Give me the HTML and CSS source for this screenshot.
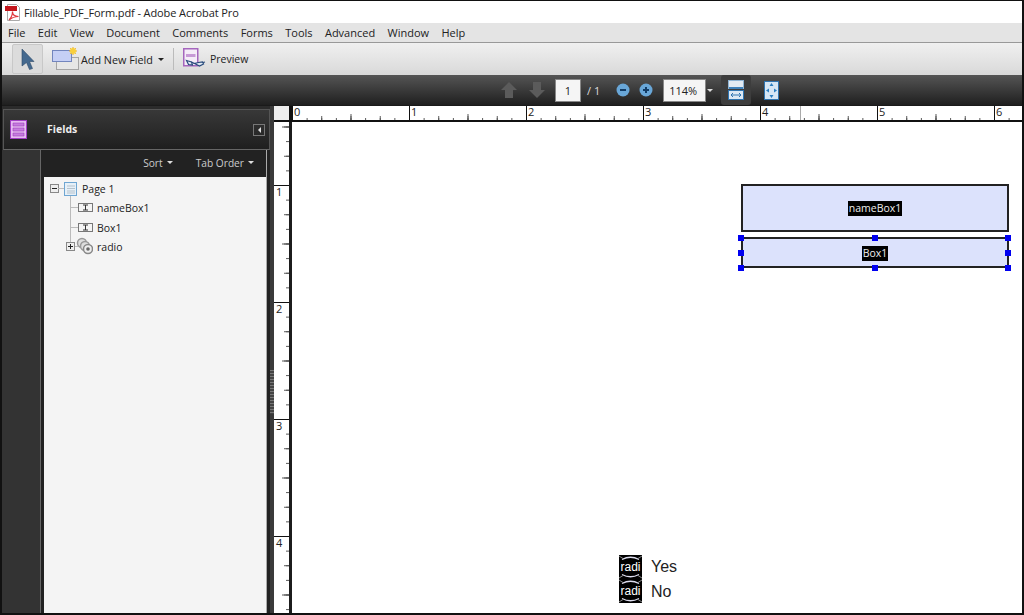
FILE: index.html
```html
<!DOCTYPE html>
<html lang="en">
<head>
    <meta charset="UTF-8">
    <title>Fillable_PDF_Form.pdf - Adobe Acrobat Pro</title>
    <link rel="stylesheet" href="styles.css">
</head>
<body>
    <div class="window">
        <div class="titlebar">
            <svg width="17" height="18" viewBox="0 0 17 18">
                <path d="M3.500 1.500h9l3 3v13h-12z" fill="#fff" stroke="#aaa"/>
                <path d="M1 3h12v5H1z" fill="#c4161c"/>
                <path d="M5 17c2-2 3.500-5 3.500-8.500 0 3 2 5 6 5-4 0-6.500 1-9.500 3.500z" fill="none" stroke="#e0383e" stroke-width="1.200"/>
            </svg>
            <span>Fillable_PDF_Form.pdf - Adobe Acrobat Pro</span>
        </div>

        <div class="menubar">
            <span>File</span>
            <span>Edit</span>
            <span>View</span>
            <span>Document</span>
            <span>Comments</span>
            <span>Forms</span>
            <span>Tools</span>
            <span>Advanced</span>
            <span>Window</span>
            <span>Help</span>
        </div>

        <div class="toolbar">
            <div class="select-btn">
                <svg width="14" height="22" viewBox="0 0 14 22">
                    <path d="M1 1l12 12.500H8.500l3 7-3 1-3-7L1 18z" fill="#44698f" stroke="#2e4a68" stroke-width=".6"/>
                </svg>
            </div>
            <div class="tool add-field">
                <svg width="27" height="24" viewBox="0 0 27 24">
                    <rect x="4.500" y="10.500" width="22" height="12" fill="#e6e6e6" stroke="#666" stroke-dasharray="1 1"/>
                    <rect x=".5" y="3.500" width="19" height="11" fill="#c5cff5" stroke="#7285bd"/>
                    <path d="M21 0v8M17 4h8M18.200 1.200l5.600 5.600M23.800 1.200l-5.600 5.600" stroke="#f0b020"/>
                    <circle cx="21" cy="4" r="3" fill="#f8cf3c"/>
                </svg>
                <span>Add New Field</span>
                <i class="caret dark"></i>
            </div>
            <div class="tool-sep"></div>
            <div class="tool preview">
                <svg width="24" height="24" viewBox="0 0 24 24">
                    <rect x="1.750" y="1.750" width="14" height="17" fill="#f5ecf8" stroke="#a566bd" stroke-width="1.500"/>
                    <rect x="4" y="7" width="9.500" height="3" fill="#c79ad6"/>
                    <path d="M4.500 13.500l5 1.500 1 3-4-.5zM12.500 16.500l5 2.500 4-2-1-2-4 .5z" fill="#dfe8f2" stroke="#2a4c7d" stroke-width="1.200"/>
                    <path d="M9.500 15l3 1.500M21 15.500l2-.5" stroke="#2a4c7d" stroke-width="1.200"/>
                </svg>
                <span>Preview</span>
            </div>
        </div>

        <div class="navbar">
            <svg class="nav-arrow" width="18" height="18" viewBox="0 0 18 18"><path d="M9 1l8 8h-4v8H5V9H1z" fill="#5b5b5b"/></svg>
            <svg class="nav-arrow" width="18" height="18" viewBox="0 0 18 18"><path d="M9 17l8-8h-4V1H5v8H1z" fill="#5b5b5b"/></svg>
            <div class="page-input">1</div>
            <span class="page-total">/ 1</span>
            <svg class="zoom-out" width="14" height="14" viewBox="0 0 14 14"><circle cx="7" cy="7" r="6.500" fill="#69a7d8"/><path d="M4 7h6" stroke="#123c66" stroke-width="2"/></svg>
            <svg class="zoom-in" width="14" height="14" viewBox="0 0 14 14"><circle cx="7" cy="7" r="6.500" fill="#69a7d8"/><path d="M4 7h6M7 4v6" stroke="#123c66" stroke-width="2"/></svg>
            <div class="zoom-input">114%</div>
            <i class="caret light"></i>
            <div class="fit-btn">
                <svg width="16" height="20" viewBox="0 0 16 20">
                    <rect x=".5" y=".5" width="15" height="8" fill="#e3ebf3" stroke="#8fb4d4"/>
                    <path d="M1 8h14" stroke="#3f81ba" stroke-width="2"/>
                    <rect x=".5" y="10.500" width="15" height="9" fill="#dbe8f4" stroke="#2f74b0"/>
                    <path d="M3 15h10M3 15l2-2M3 15l2 2M13 15l-2-2M13 15l-2 2" stroke="#2f74b0" fill="none"/>
                </svg>
            </div>
            <svg class="full-btn" width="15" height="19" viewBox="0 0 15 19">
                <rect x=".5" y=".5" width="14" height="18" fill="#d5e6f5" stroke="#2f74b0"/>
                <path d="M7.500 2l2 3h-4zM7.500 17l-2-3h4zM2 9.500l3-2v4zM13 9.500l-3-2v4z" fill="#2b7fc2"/>
            </svg>
        </div>

        <div class="main">
            <div class="side">
                <div class="side-head">
                    <svg width="17" height="19" viewBox="0 0 17 19">
                        <rect x=".5" y=".5" width="16" height="18" fill="#e7b9f2" stroke="#a23fc4"/>
                        <path d="M3 3h11v3H3zM3 8h11v3H3zM3 13h11v3H3z" fill="#c77be0" stroke="#8f35ad" stroke-width=".5"/>
                    </svg>
                    <span class="side-title">Fields</span>
                    <div class="collapse"><i></i></div>
                </div>
                <div class="side-body">
                    <div class="side-strip"></div>
                    <div class="side-content">
                        <div class="sortbar">
                            <span>Sort</span><i class="caret light"></i>
                            <span class="tab-order">Tab Order</span><i class="caret light"></i>
                        </div>
                        <div class="tree">
                            <div class="tree-row">
                                <svg width="28" height="20" viewBox="0 0 28 20">
                                    <path d="M20.500 14v6" stroke="#bbb"/>
                                    <rect x=".5" y="5.500" width="8" height="8" fill="#eee" stroke="#888"/>
                                    <path d="M2 9.500h5" stroke="#222"/>
                                    <path d="M8 9.500h6" stroke="#bbb"/>
                                    <rect x="14.500" y="3.500" width="12" height="13" fill="#e6f0f8" stroke="#6fa6d2"/>
                                    <path d="M17 7h8M17 9.500h8M17 12h8M17 14h8" stroke="#b5c2cc"/>
                                </svg>
                                <span>Page 1</span>
                            </div>
                            <div class="tree-row">
                                <svg width="43" height="20" viewBox="0 0 43 20">
                                    <path d="M20.500 0v20M20.500 9.500h8" stroke="#bbb"/>
                                    <rect x="28.500" y="5.500" width="14" height="8" fill="#f4f4f4" stroke="#777"/>
                                    <path d="M33 7h5M35.500 7v5M33 12h5" stroke="#333"/>
                                </svg>
                                <span>nameBox1</span>
                            </div>
                            <div class="tree-row">
                                <svg width="43" height="20" viewBox="0 0 43 20">
                                    <path d="M20.500 0v20M20.500 9.500h8" stroke="#bbb"/>
                                    <rect x="28.500" y="5.500" width="14" height="8" fill="#f4f4f4" stroke="#777"/>
                                    <path d="M33 7h5M35.500 7v5M33 12h5" stroke="#333"/>
                                </svg>
                                <span>Box1</span>
                            </div>
                            <div class="tree-row">
                                <svg width="43" height="20" viewBox="0 0 43 20">
                                    <path d="M20.500 0v5M24 9.500h4" stroke="#bbb"/>
                                    <rect x="16.500" y="5.500" width="8" height="8" fill="#eee" stroke="#888"/>
                                    <path d="M18 9.500h5M20.500 7v5" stroke="#222"/>
                                    <circle cx="32" cy="6" r="4.500" fill="#ddd" stroke="#999" stroke-width="1.500"/>
                                    <circle cx="35" cy="9" r="4.500" fill="#ddd" stroke="#999" stroke-width="1.500"/>
                                    <circle cx="38" cy="12" r="4.500" fill="#eee" stroke="#888" stroke-width="1.500"/>
                                    <circle cx="38" cy="12" r="1.800" fill="#666"/>
                                </svg>
                                <span>radio</span>
                            </div>
                        </div>
                    </div>
                    <div class="side-edge"></div>
                </div>
            </div>

            <div class="splitter"><div class="grip"></div></div>

            <div class="doc">
                <div class="doc-top">
                    <div class="corner"></div>
                    <div class="ruler-h">
                        <span>0</span><span>1</span><span>2</span><span>3</span><span>4</span><span>5</span><span>6</span>
                        <div class="ruler-mark"></div>
                    </div>
                </div>
                <div class="doc-body">
                    <div class="ruler-v">
                        <span>1</span><span>2</span><span>3</span><span>4</span>
                    </div>
                    <div class="page">
                        <div class="field name-box"><span class="field-label">nameBox1</span></div>
                        <div class="field box1">
                            <span class="field-label">Box1</span>
                            <i class="handle tl"></i><i class="handle tc"></i><i class="handle tr"></i>
                            <i class="handle ml"></i><i class="handle mr"></i>
                            <i class="handle bl"></i><i class="handle bc"></i><i class="handle br"></i>
                        </div>
                        <div class="radio-row yes">
                            <div class="radio-box">
                                <svg width="23" height="24" viewBox="0 0 23 24"><path d="M3 4.500Q11.500 0 20 4.500M3 19.500Q11.500 24 20 19.500" fill="none" stroke="#dde" stroke-width="1.300"/><path d="M0 1l4 2.500M23 1l-4 2.500M0 23l4-2.500M23 23l-4-2.500" stroke="#888"/></svg>
                                <span>radi</span>
                            </div>
                            <span class="radio-text">Yes</span>
                        </div>
                        <div class="radio-row no">
                            <div class="radio-box">
                                <svg width="23" height="24" viewBox="0 0 23 24"><path d="M3 4.500Q11.500 0 20 4.500M3 19.500Q11.500 24 20 19.500" fill="none" stroke="#dde" stroke-width="1.300"/><path d="M0 1l4 2.500M23 1l-4 2.500M0 23l4-2.500M23 23l-4-2.500" stroke="#888"/></svg>
                                <span>radi</span>
                            </div>
                            <span class="radio-text">No</span>
                        </div>
                    </div>
                </div>
            </div>
        </div>
    </div>
</body>
</html>
```
FILE: styles.css
```css
* {
    box-sizing: border-box;
}
body {
    margin: 0;
    font-family: "Open Sans", "Noto Sans", sans-serif;
    font-size: 11px;
    color: #222;
    background: #fff;
}
i {
    display: block;
}
svg {
    display: block;
    flex-shrink: 0;
}
.window {
    width: 1024px;
    height: 615px;
    border: 2px solid #111;
    border-top-width: 1px;
    display: flex;
    flex-direction: column;
    overflow: hidden;
}

/* title + menu */
.titlebar {
    height: 22px;
    background: #fff;
    display: flex;
    align-items: center;
    gap: 3px;
    padding-left: 2px;
    letter-spacing: -0.1px;
    flex-shrink: 0;
}
.menubar {
    height: 20px;
    background: #e4e4e4;
    border-bottom: 1px solid #999;
    display: flex;
    align-items: center;
    gap: 12.400px;
    padding-left: 6px;
    flex-shrink: 0;
}

/* toolbar */
.toolbar {
    height: 32px;
    background: linear-gradient(#f0f0f0, #d9d9d9);
    display: flex;
    align-items: center;
    padding-left: 10px;
    font-size: 10.800px;
    flex-shrink: 0;
}
.select-btn {
    width: 31px;
    height: 30px;
    background: #dcdcdc;
    border: 1px solid #c8c8c8;
    border-radius: 2px;
    display: flex;
    align-items: center;
    justify-content: center;
}
.tool {
    display: flex;
    align-items: center;
    gap: 2px;
}
.add-field {
    margin-left: 9px;
}
.tool-sep {
    width: 1px;
    height: 22px;
    background: #bbb;
    margin: 0 8px 0 9px;
}
.preview {
    gap: 4px;
    font-size: 10.500px;
}
.caret {
    width: 0;
    height: 0;
    border-left: 3px solid transparent;
    border-right: 3px solid transparent;
    border-top: 3px solid #222;
}
.caret.dark {
    margin-left: 3px;
}
.caret.light {
    border-top-color: #ddd;
    margin-left: 4px;
}

/* page navigation */
.navbar {
    height: 30px;
    background: linear-gradient(#555, #1f1f1f);
    display: flex;
    align-items: center;
    padding-left: 498px;
    color: #ddd;
    flex-shrink: 0;
}
.nav-arrow + .nav-arrow {
    margin-left: 10px;
}
.page-input, .zoom-input {
    height: 23px;
    background: #f5f5f5;
    border: 1px solid #888;
    color: #222;
    display: flex;
    align-items: center;
}
.page-input {
    width: 26px;
    margin-left: 9px;
    justify-content: center;
}
.page-total {
    margin-left: 6px;
}
.zoom-out {
    margin-left: 16px;
}
.zoom-in {
    margin-left: 9px;
}
.zoom-input {
    width: 43px;
    margin-left: 10px;
    padding-left: 5px;
}
.navbar .caret.light {
    margin-left: 1px;
}
.fit-btn {
    width: 30px;
    height: 30px;
    margin-left: 8px;
    background: #3d3d3d;
    border-radius: 3px;
    display: flex;
    align-items: center;
    justify-content: center;
}
.full-btn {
    margin-left: 13px;
}

/* main area */
.main {
    flex: 1;
    display: flex;
    background: #2b2b2b;
    min-height: 0;
    border-top: 1px solid #1a1a1a;
}
.side {
    width: 268px;
    padding-top: 3px;
    display: flex;
    flex-direction: column;
    flex-shrink: 0;
}
.side-head {
    height: 41px;
    margin-left: 1px;
    background: linear-gradient(#383838, #1f1f1f);
    border: 1px solid #555;
    border-bottom-color: #666;
    display: flex;
    align-items: center;
    padding-left: 6px;
    flex-shrink: 0;
}
.side-title {
    margin-left: 20px;
    padding-bottom: 1px;
    color: #eee;
    font-weight: 700;
    font-size: 10.500px;
}
.collapse {
    width: 12px;
    height: 12px;
    margin-left: auto;
    margin-right: 4px;
    border: 1px solid #777;
    display: flex;
    align-items: center;
    justify-content: center;
}
.collapse i {
    border-top: 3px solid transparent;
    border-bottom: 3px solid transparent;
    border-right: 3px solid #ddd;
}
.side-body {
    flex: 1;
    display: flex;
    min-height: 0;
}
.side-strip {
    width: 39px;
    background: #333;
    border-right: 1px solid #666;
    flex-shrink: 0;
}
.side-content {
    flex: 1;
    display: flex;
    flex-direction: column;
    background: #222;
    min-width: 0;
}
.sortbar {
    height: 27px;
    display: flex;
    align-items: center;
    justify-content: flex-end;
    padding: 0 12px 2px 0;
    color: #ccc;
    font-size: 10.200px;
    flex-shrink: 0;
}
.tab-order {
    margin-left: 23px;
}
.tree {
    flex: 1;
    background: #f4f4f4;
    margin-left: 3px;
    padding: 2px 0 0 6px;
    font-size: 10.500px;
}
.tree-row {
    height: 19.500px;
    display: flex;
    align-items: center;
    gap: 4px;
}
.side-edge {
    width: 4px;
    background: linear-gradient(90deg, #aaa 1px, #222 1px);
    flex-shrink: 0;
}
.splitter {
    width: 4px;
    background: #3a3a3a;
    padding-top: 264px;
    flex-shrink: 0;
}
.grip {
    height: 44px;
    background: repeating-linear-gradient(#777 0 1px, #444 1px 3px);
}

/* document + rulers */
.doc {
    flex: 1;
    display: flex;
    flex-direction: column;
    min-width: 0;
}
.doc-top {
    display: flex;
    height: 16px;
    flex-shrink: 0;
    background: #111;
}
.corner {
    width: 15px;
    height: 14px;
    background: #eee;
    flex-shrink: 0;
}
.ruler-h {
    margin-left: 3px;
    flex: 1;
    height: 14px;
    position: relative;
    display: flex;
    background-color: #fff;
    background-image:
        linear-gradient(90deg, #111 1px, transparent 1px),
        linear-gradient(90deg, #555 1px, transparent 1px),
        linear-gradient(90deg, #555 1px, transparent 1px),
        linear-gradient(90deg, #555 1px, transparent 1px);
    background-size: 117px 14px, 58.500px 6px, 29.250px 4px, 14.625px 2px;
    background-position: 0 bottom;
    background-repeat: repeat-x;
}
.ruler-h span {
    width: 117px;
    flex-shrink: 0;
    padding-left: 2px;
    line-height: 12px;
}
.ruler-mark {
    position: absolute;
    left: 508px;
    top: 0;
    width: 1px;
    height: 14px;
    background: #aaa;
}
.doc-body {
    flex: 1;
    display: flex;
    min-height: 0;
}
.ruler-v {
    width: 15px;
    flex-shrink: 0;
    padding-top: 63px;
    background-color: #fff;
    background-image:
        linear-gradient(#111 1px, transparent 1px),
        linear-gradient(#555 1px, transparent 1px),
        linear-gradient(#555 1px, transparent 1px),
        linear-gradient(#555 1px, transparent 1px);
    background-size: 15px 117px, 7px 58.500px, 5px 29.250px, 3px 14.625px;
    background-position: 0 63px, right 4.500px, right 4.500px, right 4.500px;
    background-repeat: repeat-y;
}
.ruler-v span {
    display: block;
    height: 117px;
    padding-left: 2px;
    line-height: 14px;
}
.page {
    flex: 1;
    background: #fff;
    border-left: 3px solid #1c1c1c;
    position: relative;
}

/* form fields on the page */
.field {
    position: absolute;
    left: 449px;
    width: 268px;
    padding-top: 1px;
    background: #dce2fc;
    border: 2px solid #222;
    display: flex;
    align-items: center;
    justify-content: center;
    font-size: 10.500px;
}
.name-box {
    top: 62px;
    height: 48px;
}
.box1 {
    top: 115px;
    height: 31px;
}
.field-label {
    background: #000;
    color: #eee;
    padding: 0 1px;
    line-height: 15px;
}
.handle {
    position: absolute;
    width: 6px;
    height: 6px;
    background: #0000f0;
}
.tl, .tc, .tr { top: -4px; }
.ml, .mr { top: 11px; }
.bl, .bc, .br { bottom: -5px; }
.tl, .ml, .bl { left: -5px; }
.tc, .bc { left: 129px; }
.tr, .mr, .br { right: -4px; }

.radio-row {
    position: absolute;
    left: 327px;
    display: flex;
    align-items: center;
    gap: 9px;
}
.radio-row.yes { top: 433px; }
.radio-row.no { top: 457px; }
.no .radio-text { margin-top: 2px; }
.radio-box {
    width: 23px;
    height: 24px;
    background: #000;
    position: relative;
    display: flex;
    align-items: center;
    justify-content: center;
    color: #fff;
    font-family: "Liberation Sans", Arial, sans-serif;
    font-size: 12px;
}
.radio-box svg {
    position: absolute;
    left: 0;
    top: 0;
}
.radio-box span {
    position: relative;
}
.radio-text {
    font-family: "Liberation Sans", Arial, sans-serif;
    font-size: 16px;
    color: #222;
}
```
